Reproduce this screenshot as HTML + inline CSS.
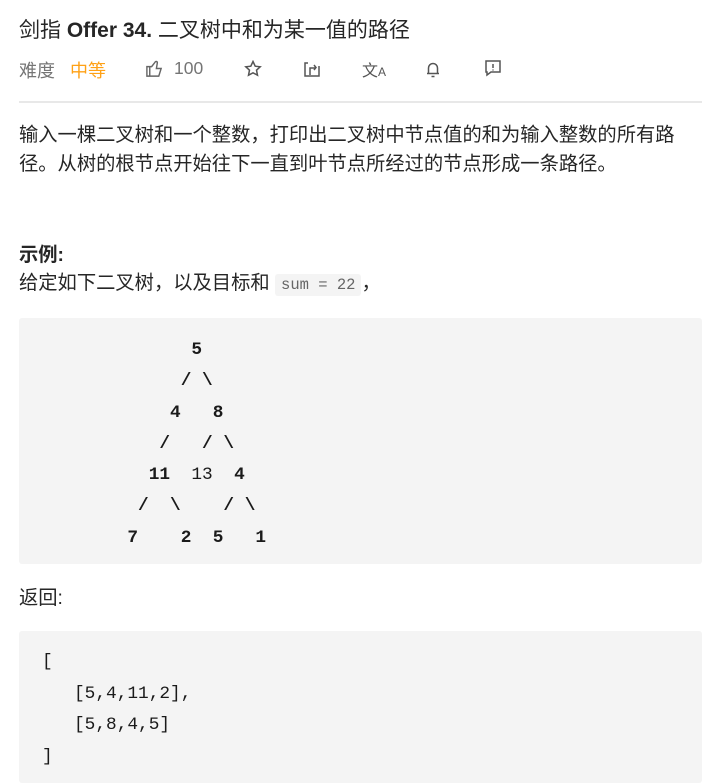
<!DOCTYPE html>
<html><head><meta charset="utf-8"><style>
body{margin:0;background:#fff;font-family:"Liberation Sans","Noto Sans CJK SC",sans-serif;color:#262626;width:702px;height:783px;overflow:hidden;position:relative}
.a{position:absolute;white-space:nowrap}
.t{left:19px;top:14px;font-size:21px;color:#262626}
.meta{top:57px;font-size:18px;color:#757575}
.hr{position:absolute;left:19px;top:101px;width:683px;height:2px;background:#e8e8e8}
.p{left:19px;font-size:19.3px;line-height:29px;color:#262626}
.box{position:absolute;left:19px;width:683px;background:#f4f4f4;border-radius:3px}
pre{margin:0;font-family:"Liberation Mono",monospace;font-size:17.8px;color:#1a1a1a;position:absolute;left:23px;white-space:pre}
.c{background:#f4f4f4;border-radius:3px;font-family:"Liberation Mono",monospace;font-size:15.5px;color:#666;padding:2px 6px}
svg{position:absolute}
</style></head><body>
<div class="a t">剑指 <b>Offer 34.</b> 二叉树中和为某一值的路径</div>
<div class="a meta" style="left:19px">难度</div>
<div class="a meta" style="left:70px;color:#ffa116">中等</div>
<svg style="left:145px;top:59px" width="19" height="19" viewBox="0 0 20 20" fill="none" stroke="#666" stroke-width="1.5"><path d="M2 8h3v10H2zM5 18h9.5l2.5-8h-5l1-6c0-1.5-2-2-2.5-.5L7 8H5"/></svg>
<div class="a meta" style="left:174px;top:58px;font-size:17.5px">100</div>
<svg style="left:244px;top:60px" width="18" height="18" viewBox="0 0 18 18" fill="none" stroke="#555" stroke-width="1.5"><path d="M9 1.5l2.2 4.7 5 .6-3.7 3.4 1 5L9 12.8 4.5 15.2l1-5L1.8 6.8l5-.6z"/></svg>
<svg style="left:303px;top:60px" width="18" height="18" viewBox="0 0 18 18" fill="none" stroke="#555" stroke-width="1.5"><path d="M5 3H2v13h14V6M7 15V8h6M11 5l2 2.5L11 10"/></svg>
<div class="a" style="left:362px;top:57px;font-size:16px;color:#555">文<span style="font-size:12px">A</span></div>
<svg style="left:424px;top:60px" width="18" height="18" viewBox="0 0 18 18" fill="none" stroke="#555" stroke-width="1.5"><path d="M4.5 13V8a4.5 4.5 0 019 0v5M3 13.5h12M7.5 16.5h3"/></svg>
<svg style="left:484px;top:59px" width="18" height="18" viewBox="0 0 18 18" fill="none" stroke="#555" stroke-width="1.5"><path d="M2 2h14v11H7l-4 3V13H2zM9 5v4M9 10.5v1"/></svg>
<div class="hr"></div>
<div class="a p" style="top:121px">输入一棵二叉树和一个整数，打印出二叉树中节点值的和为输入整数的所有路<br>径。从树的根节点开始往下一直到叶节点所经过的节点形成一条路径。</div>
<div class="a p" style="top:241px;font-weight:bold">示例:</div>
<div class="a p" style="top:269px">给定如下二叉树，以及目标和 <span class="c">sum = 22</span>，</div>
<div class="box" style="top:318px;height:246px"><pre style="top:17px;line-height:31.3px;font-weight:bold">              5
             / \
            4   8
           /   / \
          11  <span style="font-weight:normal">13</span>  4
         /  \    / \
        7    2  5   1</pre></div>
<div class="a p" style="top:584px">返回:</div>
<div class="box" style="top:631px;height:152px"><pre style="top:16px;left:23px;line-height:31.5px">[
   [5,4,11,2],
   [5,8,4,5]
]</pre></div>
</body></html>
